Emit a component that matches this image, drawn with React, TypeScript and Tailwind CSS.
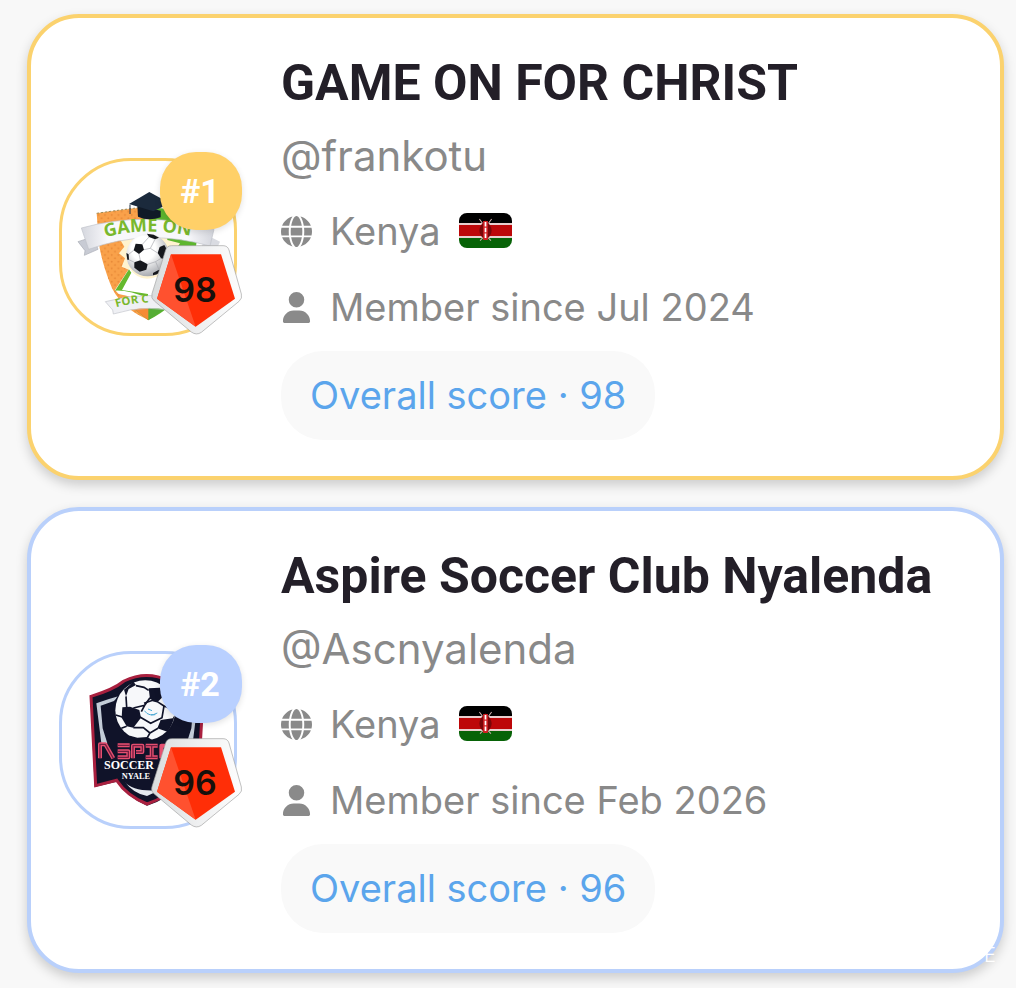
import type { ReactNode } from "react";
import { FaGlobe, FaUser } from "react-icons/fa6";

interface Club {
  rank: number;
  name: string;
  handle: string;
  country: string;
  memberSince: string;
  score: number;
  borderClass: string;
  badgeClass: string;
  crest: ReactNode;
}

function SoccerBall() {
  return (
    <g>
      <circle r="64" fill="url(#ball-shade)" />
      <g fill="#15171c">
        <polygon points="-36,-34 -16,-32 -11,-16 -26,-3 -42,-14" />
        <polygon points="36,-24 50,-30 60,-12 56,14 40,10 30,-6" />
        <polygon points="-40,22 -22,16 0,28 -4,44 -24,50 -40,38" />
        <path d="M-2-64 18-61 34-52 22-47 4-54Z" />
        <path d="M-64-6-57-2-56 14-61 14Z" />
        <path d="M16 54 34 44 42 46 28 58 16 61Z" />
      </g>
      <path
        d="M-11-16 8-20 30-6M-26-3-22 16M0 28 24 20 40 10M24 20 34 44M4-54-16-32M-42-14-57-2M-40 22-56 14M8-20 22-47"
        fill="none"
        stroke="#a6a8ae"
        strokeWidth="2"
      />
    </g>
  );
}

function GameOnCrest() {
  return (
    <svg viewBox="36 63 516 516" className="size-full" role="img" aria-label="Game On For Christ crest">
      <defs>
        <radialGradient id="ball-shade" cx="40%" cy="35%" r="70%">
          <stop offset="0.4" stopColor="#fff" />
          <stop offset="1" stopColor="#9da0a6" />
        </radialGradient>
        <linearGradient id="ribbon" x1="0" x2="1">
          <stop offset="0" stopColor="#d5d7de" />
          <stop offset="0.2" stopColor="#f8f8fb" />
          <stop offset="0.8" stopColor="#f8f8fb" />
          <stop offset="1" stopColor="#d3d5dc" />
        </linearGradient>
        <pattern id="dots" width="20" height="20" patternUnits="userSpaceOnUse">
          <circle cx="5" cy="5" r="3" fill="#e88a38" />
          <circle cx="15" cy="15" r="3" fill="#e88a38" />
        </pattern>
      </defs>
      <path d="M140 220Q220 208 295 200V540Q205 500 180 430Q150 350 146 300Z" fill="#f9a14a" />
      <path d="M140 220Q220 208 295 200V540Q205 500 180 430Q150 350 146 300Z" fill="url(#dots)" />
      <path d="M140 220Q220 208 295 200" fill="none" stroke="#9a8a55" strokeWidth="3" strokeDasharray="7 5" />
      <path d="M295 200Q370 208 446 220Q444 350 405 435Q370 505 295 540Z" fill="#5db52e" />
      <path
        d="M295 240 312 275 350 262 352 300 390 310 368 342 390 375 352 385 340 420 295 440 250 420 238 390 215 380 225 355 207 340 223 320 208 295 235 295 240 270 262 280Z"
        fill="#fff3cf"
      />
      <path d="M195 450 238 385Q270 430 320 410L360 470 295 482 206 462Z" fill="#fff" />
      <path d="M195 452 237 388 244 398 216 450 294 462 294 476Q240 450 195 452Z" fill="#65b92e" />
      <path d="M250 505 295 488 340 510 295 541Z" fill="#55ad35" />
      <path d="M250 505 295 490V541Z" fill="#f58b35" />
      <path d="M84 305 130 290 144 328 103 346 105 332Z" fill="#c8cbd4" stroke="#a9acb5" strokeWidth="2" />
      <path d="M470 285 510 305 492 345 450 330Z" fill="#d9dbe1" />
      <path d="M94 264Q290 210 492 268L480 318Q290 264 116 328Z" fill="url(#ribbon)" stroke="#bfc2ca" strokeWidth="2" />
      <g fill="#7ab82d" fontFamily="'Open Sans', Inter, sans-serif" fontWeight="700">
        <path id="name-arc" d="M166 292Q295 256 450 294" fill="none" />
        <text fontSize="54">
          <textPath href="#name-arc">GAME ON</textPath>
        </text>
      </g>
      <path d="M166 485Q295 448 424 485L410 522Q295 488 190 522L188 510Z" fill="#eff0f4" stroke="#bfc2ca" strokeWidth="2" />
      <g fill="#7ab82d" fontFamily="'Open Sans', Inter, sans-serif" fontWeight="700">
        <path id="motto-arc" d="M199 502Q295 474 420 500" fill="none" />
        <text fontSize="34">
          <textPath href="#motto-arc">FOR C</textPath>
        </text>
      </g>
      <g transform="translate(293 345)">
        <SoccerBall />
      </g>
      <path d="M262 196 332 212V232Q295 244 264 230Z" fill="#101a27" />
      <path d="M237 192 298 156 360 190 310 214Z" fill="#1b2a3c" />
      <path d="M240 194V222" stroke="#1b2a3c" strokeWidth="3" />
    </svg>
  );
}

function AspireCrest() {
  return (
    <svg viewBox="36 57 516 516" className="size-full" role="img" aria-label="Aspire Soccer Club Nyalenda crest">
      <path
        d="M121 183Q190 164 220 137Q290 102 360 137Q400 166 461 183L446 456 400 440Q350 495 291 512Q230 485 200 440L134 456Z"
        fill="#101329"
      />
      <path
        d="M123 184Q190 164 222 138Q290 105 358 138Q400 166 459 184L444 452 400 436Q350 488 291 507Q230 482 200 436L137 452Z"
        fill="none"
        stroke="#a9203f"
        strokeWidth="9"
      />
      <path d="M139 205Q175 192 205 184L192 198 152 212 158 280 172 325H154Z" fill="#c3ccd8" />
      <path d="M443 205Q407 192 377 184L390 198 430 212 424 280 410 325H428Z" fill="#c3ccd8" />
      <path d="M224 440Q250 472 330 465L291 483Q250 475 224 440Z" fill="#e4e9ef" />
      <circle cx="286" cy="226" r="94" fill="#101329" />
      <circle cx="286" cy="226" r="90" fill="#f7f8fa" />
      <g fill="#101329">
        <path d="M217 217 240 215 268 225 273 248 250 278 230 274 215 248Z" />
        <path d="M296 160 330 158 338 186 322 202 300 192Z" />
        <path d="M222 164 250 140 258 150 236 162 228 184Z" />
        <path d="M332 255 368 250 374 240Q368 272 352 290L322 280Z" />
        <path d="M240 302 262 308 292 306 308 316Q270 324 240 306Z" />
      </g>
      <g fill="none" stroke="#101329" strokeWidth="5">
        <path d="M258 152 282 157 296 166M300 188 284 211 250 219M228 184 230 216M284 211 274 230" />
        <path d="M282 205 308 196 322 200 342 213 336 248 302 265 270 246M342 213 374 226" />
        <path d="M250 278 280 278 300 294 292 308M300 294 324 280M217 246 197 240M230 274 214 280" />
      </g>
      <path d="M283 227Q298 248 322 234M294 222 306 227M303 240 316 239" fill="none" stroke="#4ba8d3" strokeWidth="3" />
      <g fill="none" strokeLinejoin="round">
        <path
          d="M150 370V328H166L190 370M203 331H239M203 349H235V367H203M249 370V332H277V351H258M287 332H323M305 332V367M287 367H323M334 370V332H363V350H342L366 370"
          stroke="#e64f70"
          strokeWidth="12"
        />
        <path
          d="M150 370V328H166L190 370M203 331H239M203 349H235V367H203M249 370V332H277V351H258M287 332H323M305 332V367M287 367H323"
          stroke="#741f40"
          strokeWidth="4"
        />
      </g>
      <g fill="#fff" fontFamily="'Liberation Serif', serif" fontWeight="700">
        <text x="162" y="402" fontSize="36">SOCCER</text>
        <text x="215" y="431" fontSize="25">NYALE</text>
      </g>
    </svg>
  );
}

function ScoreShield({ score }: { score: number }) {
  return (
    <div className="absolute -right-1.5 bottom-0 flex h-[92px] w-[92px] items-center justify-center">
      <svg viewBox="0 0 276 276" className="absolute inset-0 size-full" aria-hidden="true">
        <defs>
          <linearGradient id="shield-rim" x1="0" x2="1">
            <stop offset="0" stopColor="#d9dcdd" />
            <stop offset="0.5" stopColor="#eeeff0" />
            <stop offset="1" stopColor="#fdfdfd" />
          </linearGradient>
        </defs>
        <path
          d="M62 5H216Q230 5 234 18L271 150Q275 163 264 172L151 265Q136 275 121 264L10 171Q-1 163 3 149L44 18Q48 5 62 5Z"
          fill="url(#shield-rim)"
          stroke="#a2a2a2"
          strokeWidth="2"
        />
        <path d="M60 31H210L252 164 134 248 18 164Z" fill="#ff2e07" />
        <path d="M60 31 134 248 18 164Z" fill="#ff512f" />
      </svg>
      <span className="relative pr-1 text-[34px] leading-10 font-semibold text-[#16100c]">
        {score}
      </span>
    </div>
  );
}

function KenyaFlag() {
  return (
    <svg viewBox="0 0 156 104" className="mb-0.5 h-[35px] w-[53px] rounded-lg" preserveAspectRatio="none" role="img" aria-label="Flag of Kenya">
      <path fill="#000" d="M0 0h156v32H0z" />
      <path fill="#e9cfcf" d="M0 30h156v44H0z" />
      <path fill="#bd0709" d="M0 36h156v32H0z" />
      <path fill="#076307" d="M0 74h156v30H0z" />
      <path d="m60 18 10 14v42l-8 8M96 18 86 32v42l8 8" fill="none" stroke="#d0b0b0" strokeWidth="3" />
      <path d="M78 22Q60 36 60 52T78 80Q96 68 96 52T78 22Z" fill="#790608" />
      <path d="M71 24H85V80H71Z" fill="#d22124" />
      <path d="M78 27V77" stroke="#fff" strokeWidth="5" strokeDasharray="13 4" />
    </svg>
  );
}

function ClubCard({ club }: { club: Club }) {
  return (
    <article
      className={`flex items-center gap-11 rounded-[52px] border-4 bg-white py-9 pr-9 pl-7 shadow-[0_5px_12px_rgba(0,0,0,0.18)] ${club.borderClass}`}
    >
      <div className="relative size-[178px] shrink-0">
        <div className={`size-full overflow-hidden rounded-[72px] border-[3px] bg-white ${club.borderClass}`}>
          {club.crest}
        </div>
        <span
          className={`absolute -top-1.5 -right-[5px] flex h-[78px] w-[82px] items-center justify-center rounded-[36px] pr-0.5 font-['Roboto',sans-serif] text-[34px] leading-10 font-bold text-white shadow-[0_2px_6px_rgba(0,0,0,0.12)] ${club.badgeClass}`}
        >
          #{club.rank}
        </span>
        <ScoreShield score={club.score} />
      </div>

      <div className="min-w-0 text-[38px] leading-[48px] text-[#898989]">
        <h2 className="font-['Roboto',sans-serif] text-[50px] leading-[58px] font-bold whitespace-nowrap text-[#231f28]">
          {club.name}
        </h2>
        <p className="mt-5 text-[42px] leading-[48px]">{club.handle}</p>
        <p className="mt-[27px] flex items-center gap-[18px]">
          <FaGlobe className="size-[31px] shrink-0 text-[#8a8a8a]" />
          <span>{club.country}</span>
          <KenyaFlag />
        </p>
        <p className="mt-7 flex items-center gap-[18px]">
          <FaUser className="size-[31px] shrink-0 text-[#8a8a8a]" />
          <span>Member since {club.memberSince}</span>
        </p>
        <p className="mt-5 w-fit rounded-[42px] bg-[#f9f9f9] px-[29px] py-5 leading-[49px] text-[#5ba5ec]">
          Overall score · {club.score}
        </p>
      </div>
    </article>
  );
}

const clubs: Club[] = [
  {
    rank: 1,
    name: "GAME ON FOR CHRIST",
    handle: "@frankotu",
    country: "Kenya",
    memberSince: "Jul 2024",
    score: 98,
    borderClass: "border-[#fbd26e]",
    badgeClass: "bg-[#ffd068]",
    crest: <GameOnCrest />,
  },
  {
    rank: 2,
    name: "Aspire Soccer Club Nyalenda",
    handle: "@Ascnyalenda",
    country: "Kenya",
    memberSince: "Feb 2026",
    score: 96,
    borderClass: "border-[#b9d0fb]",
    badgeClass: "bg-[#b9d0ff]",
    crest: <AspireCrest />,
  },
];

export default function App() {
  return (
    <main className="relative flex min-h-screen flex-col gap-[27px] bg-[#f8f8f8] pt-3.5 pr-3 pb-4 pl-[27px] font-['Inter',sans-serif]">
      {clubs.map((club) => (
        <ClubCard key={club.rank} club={club} />
      ))}
      <span className="absolute right-5 bottom-5 text-xl leading-7 font-light text-white">E</span>
    </main>
  );
}
